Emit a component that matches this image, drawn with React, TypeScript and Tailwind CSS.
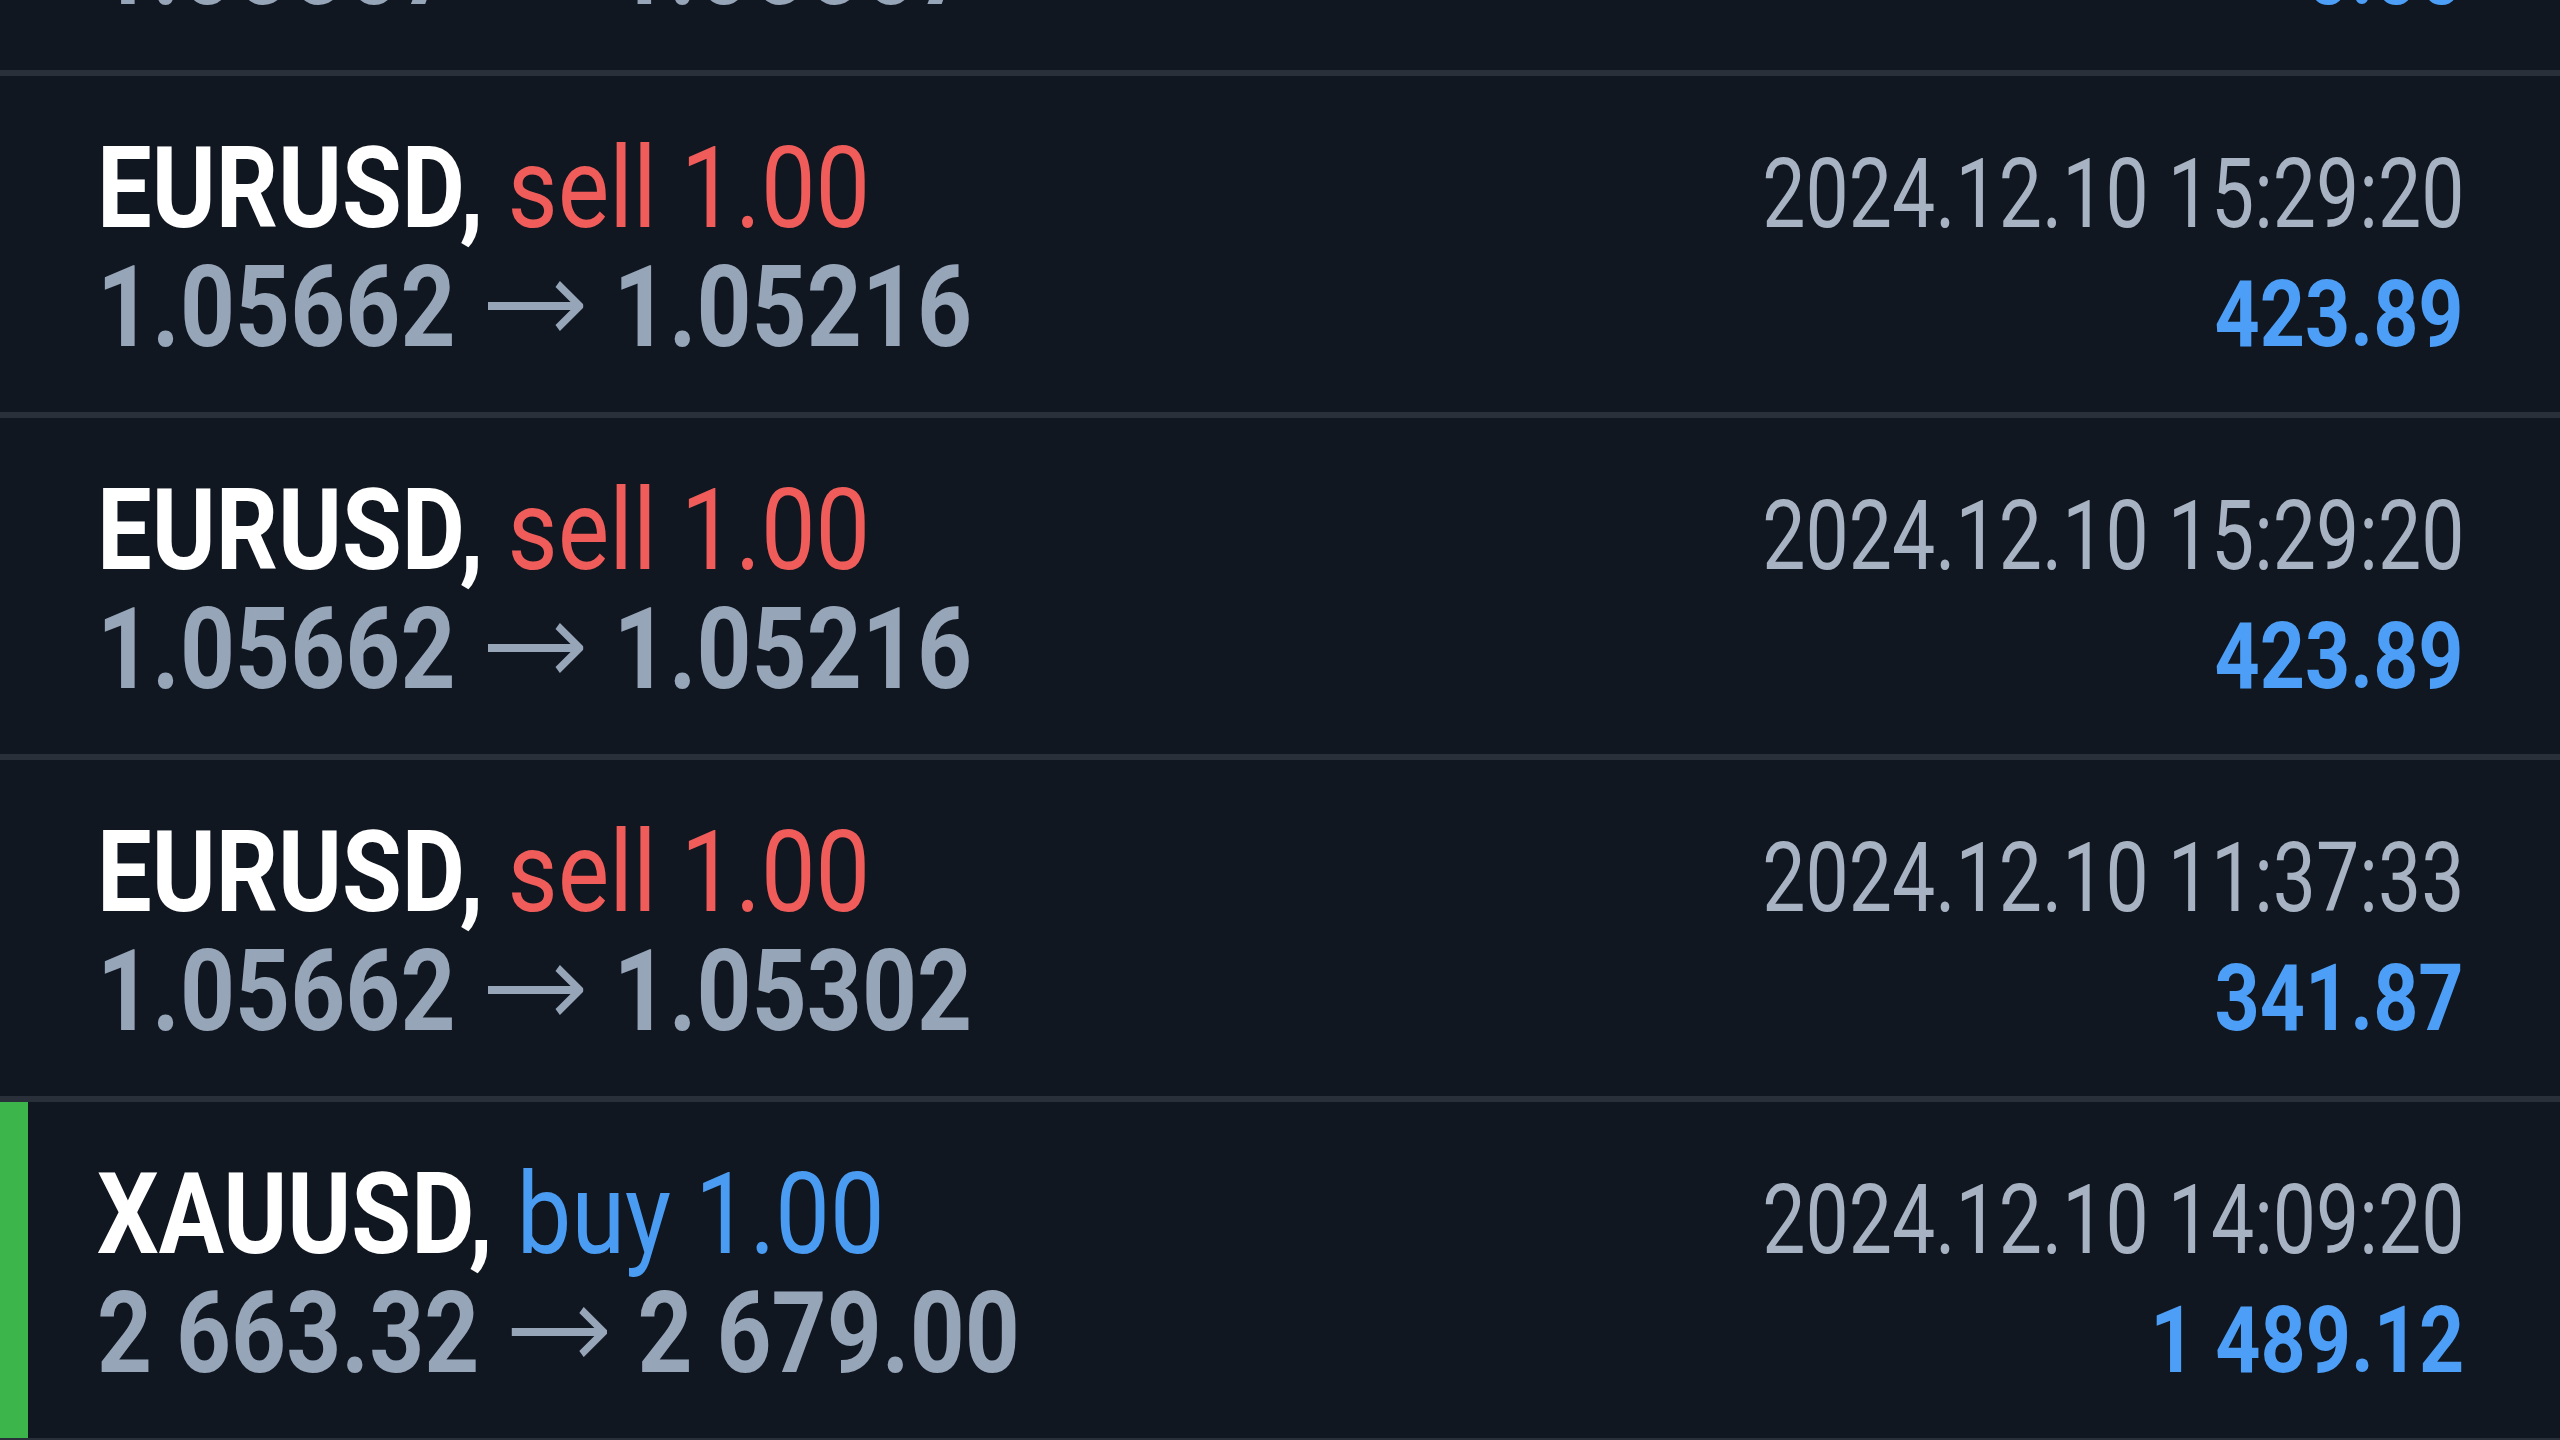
type Deal = {
  symbol: string;
  side: 'buy' | 'sell';
  volume: string;
  open: string;
  close: string;
  time: string;
  profit: string;
  active?: boolean;
};

const deals: Deal[] = [
  { symbol: 'EURUSD', side: 'sell', volume: '1.00', open: '1.05567', close: '1.05567', time: '2024.12.10 15:12:04', profit: '0.00' },
  { symbol: 'EURUSD', side: 'sell', volume: '1.00', open: '1.05662', close: '1.05216', time: '2024.12.10 15:29:20', profit: '423.89' },
  { symbol: 'EURUSD', side: 'sell', volume: '1.00', open: '1.05662', close: '1.05216', time: '2024.12.10 15:29:20', profit: '423.89' },
  { symbol: 'EURUSD', side: 'sell', volume: '1.00', open: '1.05662', close: '1.05302', time: '2024.12.10 11:37:33', profit: '341.87' },
  { symbol: 'XAUUSD', side: 'buy', volume: '1.00', open: '2 663.32', close: '2 679.00', time: '2024.12.10 14:09:20', profit: '1 489.12', active: true },
];

// the price arrow, drawn a bit heavier than the font's own glyph
const Arrow = () => (
  <svg
    viewBox="0 0 114 50"
    preserveAspectRatio="none"
    className="mx-[36px] inline-block h-[50px] w-[114px] align-[15px]"
    fill="none"
    stroke="currentColor"
    strokeWidth={8}
  >
    <path d="M2 25H108" />
    <path d="M84 3L110 25L84 47" />
  </svg>
);

const DealRow = ({ deal }: { deal: Deal }) => {
  const sideColor = deal.side === 'buy' ? 'text-[#4a9bf2]' : 'text-[#ef5c5a]';
  return (
    <div className="flex h-[342px] border-t-[6px] border-[#2a3039]">
      <div className={`w-[28px] shrink-0 ${deal.active ? 'bg-[#3cb64b]' : ''}`} />
      <div className="flex grow flex-col pl-[69px] pr-[96px] pt-[52px]">
        <div className="flex items-baseline justify-between leading-[121px]">
          <span className="inline-block origin-left scale-x-[0.86] whitespace-nowrap text-[113px]">
            <span className="font-bold text-white">{deal.symbol},</span>{' '}
            <span className={sideColor}>
              {deal.side} {deal.volume}
            </span>
          </span>
          <span className="inline-block origin-right scale-x-[0.793] whitespace-nowrap text-[97px] text-[#a7b2c3]">
            {deal.time}
          </span>
        </div>
        <div className="-mt-[8px] flex items-baseline justify-between leading-[121px]">
          <span className="inline-block origin-left scale-x-[0.85] whitespace-nowrap text-[113px] font-bold text-[#97a5b9]">
            {deal.open}
            <Arrow />
            {deal.close}
          </span>
          <span className="inline-block origin-right scale-x-[0.857] whitespace-nowrap text-[92px] font-bold text-[#4c9ef6]">
            {deal.profit}
          </span>
        </div>
      </div>
    </div>
  );
};

export default function App() {
  return (
    <div className="h-screen w-full overflow-hidden bg-[#111720] font-['Roboto',sans-serif]">
      <div className="-mt-[272px]">
        {deals.map((deal, i) => (
          <DealRow key={i} deal={deal} />
        ))}
        <div className="border-t-[6px] border-[#2a3039]" />
      </div>
    </div>
  );
}
